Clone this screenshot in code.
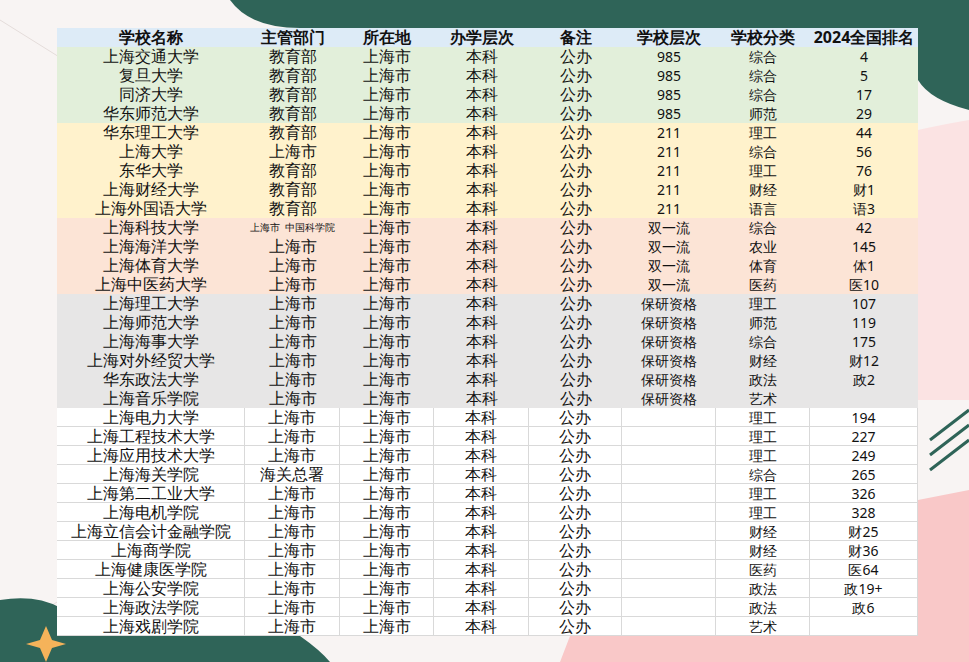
const rows: string[][] = [
  ["上海交通大学", "教育部", "985", "综合", "4", "g"],
  ["复旦大学", "教育部", "985", "综合", "5", "g"],
  ["同济大学", "教育部", "985", "综合", "17", "g"],
  ["华东师范大学", "教育部", "985", "师范", "29", "g"],
  ["华东理工大学", "教育部", "211", "理工", "44", "y"],
  ["上海大学", "上海市", "211", "综合", "56", "y"],
  ["东华大学", "教育部", "211", "理工", "76", "y"],
  ["上海财经大学", "教育部", "211", "财经", "财1", "y"],
  ["上海外国语大学", "教育部", "211", "语言", "语3", "y"],
  ["上海科技大学", "上海市  中国科学院", "双一流", "综合", "42", "p"],
  ["上海海洋大学", "上海市", "双一流", "农业", "145", "p"],
  ["上海体育大学", "上海市", "双一流", "体育", "体1", "p"],
  ["上海中医药大学", "上海市", "双一流", "医药", "医10", "p"],
  ["上海理工大学", "上海市", "保研资格", "理工", "107", "s"],
  ["上海师范大学", "上海市", "保研资格", "师范", "119", "s"],
  ["上海海事大学", "上海市", "保研资格", "综合", "175", "s"],
  ["上海对外经贸大学", "上海市", "保研资格", "财经", "财12", "s"],
  ["华东政法大学", "上海市", "保研资格", "政法", "政2", "s"],
  ["上海音乐学院", "上海市", "保研资格", "艺术", "", "s"],
  ["上海电力大学", "上海市", "", "理工", "194", "w"],
  ["上海工程技术大学", "上海市", "", "理工", "227", "w"],
  ["上海应用技术大学", "上海市", "", "理工", "249", "w"],
  ["上海海关学院", "海关总署", "", "综合", "265", "w"],
  ["上海第二工业大学", "上海市", "", "理工", "326", "w"],
  ["上海电机学院", "上海市", "", "理工", "328", "w"],
  ["上海立信会计金融学院", "上海市", "", "财经", "财25", "w"],
  ["上海商学院", "上海市", "", "财经", "财36", "w"],
  ["上海健康医学院", "上海市", "", "医药", "医64", "w"],
  ["上海公安学院", "上海市", "", "政法", "政19+", "w"],
  ["上海政法学院", "上海市", "", "政法", "政6", "w"],
  ["上海戏剧学院", "上海市", "", "艺术", "", "w"],
];

const bg: Record<string, string> = {
  g: "bg-[#e2efda]",
  y: "bg-[#fff2cc]",
  p: "bg-[#fce4d6]",
  s: "bg-[#e7e6e6]",
  w: "bg-white",
};

const cols = "grid grid-cols-[188px_95px_94px_95px_93px_94px_94px_108px]";

export default function App() {
  return (
    <div className="relative w-[969px] h-[662px] overflow-hidden bg-[#f8f4f3] font-['Noto_Sans_CJK_SC',sans-serif] text-[16px] text-[#111]">
      {/* background decorations */}
      <svg className="absolute inset-0" width="969" height="662">
        <path d="M0 20 L480 320 L0 640" stroke="#e4dcda" fill="none" />
        <path d="M969 260 L700 470 L969 640" stroke="#e4dcda" fill="none" />
        <path d="M230 0 Q250 28 300 28 L969 28 L969 0 Z" fill="#2f6458" />
        <path d="M918 28 L969 28 L969 110 Q930 100 918 80 Z" fill="#2f6458" />
        <path d="M918 130 Q940 125 969 120 L969 400 L918 400 Z" fill="#fbe3e3" />
        <path d="M918 500 L969 490 L969 662 L560 662 L570 636 L918 636 Z" fill="#f9c8c8" />
        <path d="M0 600 Q60 590 90 636 L300 636 Q320 650 330 662 L0 662 Z" fill="#2f6458" />
        <path d="M40 640 l6 -14 l6 14 l14 4 l-14 4 l-6 14 l-6 -14 l-14 -4 Z" fill="#f5b35a" />
        <path d="M930 440 l39 -30 M930 455 l39 -30 M930 470 l39 -30" stroke="#2f6458" strokeWidth="3" />
      </svg>
      <div className="absolute left-[57px] top-[28px] w-[861px]">
        <div className={`${cols} h-[19px] bg-[#ddebf7] font-bold leading-[19px] text-center`}>
          {["学校名称", "主管部门", "所在地", "办学层次", "备注", "学校层次", "学校分类", "2024全国排名"].map((h) => (
            <div key={h}>{h}</div>
          ))}
        </div>
        {rows.map((r) => {
          const white = r[5] === "w";
          const cell = white ? "border-r border-b border-[#d9d9d9]" : "";
          const vals = [r[0], r[1], "上海市", "本科", "公办", r[2], r[3], r[4]];
          return (
            <div key={r[0]} className={`${cols} h-[19px] leading-[19px] text-center ${bg[r[5]]}`}>
              {vals.map((v, i) => (
                <div
                  key={i}
                  className={`${cell} ${i === 1 && v.includes("中国") ? "text-[10px]" : ""} ${i >= 5 ? "font-['DejaVu_Sans','Noto_Sans_CJK_SC',sans-serif] text-[14px]" : ""} whitespace-pre overflow-hidden`}
                >
                  {v}
                </div>
              ))}
            </div>
          );
        })}
      </div>
    </div>
  );
}
